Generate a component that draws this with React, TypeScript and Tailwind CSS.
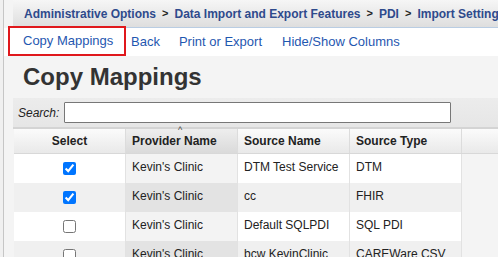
import React from "react";

const rows = [
  { checked: true, provider: "Kevin's Clinic", source: "DTM Test Service", type: "DTM" },
  { checked: true, provider: "Kevin's Clinic", source: "cc", type: "FHIR" },
  { checked: false, provider: "Kevin's Clinic", source: "Default SQLPDI", type: "SQL PDI" },
  { checked: false, provider: "Kevin's Clinic", source: "bcw KevinClinic", type: "CAREWare CSV" },
];

export default function App() {
  return (
    <div
      className="w-[498px] h-[257px] overflow-hidden bg-[#f4f4f4] flex"
      style={{ fontFamily: '"Liberation Sans", Arial, sans-serif' }}
    >
      <div className="w-[3px] shrink-0 bg-[#f0f0f0]" />
      <div className="w-[1px] shrink-0 bg-[#c6c6c6]" />
      <div className="flex-1 flex flex-col min-w-0">
        {/* breadcrumb */}
        <div className="ml-[9px] h-[28px] shrink-0 flex items-center gap-[6px] pl-[11px] whitespace-nowrap overflow-hidden text-[12px] font-bold text-[#2e4a8c] bg-gradient-to-b from-[#f6f6f6] to-[#dedede] border-b border-[#b9cde3]">
          <span>Administrative Options</span>
          <span className="text-[#222] text-[11px]">&gt;</span>
          <span>Data Import and Export Features</span>
          <span className="text-[#222] text-[11px]">&gt;</span>
          <span>PDI</span>
          <span className="text-[#222] text-[11px]">&gt;</span>
          <span>Import Settings</span>
        </div>
        {/* nav row */}
        <div className="h-[28px] shrink-0 bg-white flex items-center whitespace-nowrap text-[13px] text-[#1f57b0]">
          <div className="ml-[4px] h-[30px] -mt-[2px] w-[118px] border-2 border-[#e0181c] flex items-center pl-[13px]">
            Copy Mappings
          </div>
          <span className="ml-[5px]">Back</span>
          <span className="ml-[19px]">Print or Export</span>
          <span className="ml-[20px]">Hide/Show Columns</span>
        </div>
        {/* title */}
        <div className="h-[42px] shrink-0 pl-[19px] pt-[7px] text-[24px] font-bold text-[#333] leading-[28px]">
          Copy Mappings
        </div>
        {/* search */}
        <div className="ml-[9px] h-[31px] shrink-0 flex items-center bg-gradient-to-b from-[#ececec] to-[#e6e6e6] border-b-2 border-[#d4d4d4]">
          <span className="pl-[5px] text-[12px] italic text-[#222]">Search:</span>
          <div className="ml-[5px] w-[387px] h-[21px] bg-white border border-[#777] rounded-[1px]" />
        </div>
        {/* table */}
        <div className="ml-[10px] flex flex-col text-[12px] text-[#222]">
          <div className="h-[25px] flex font-bold bg-gradient-to-b from-[#fbfbfb] to-[#e9e9e9] border-b border-[#d8d8d8]">
            <div className="w-[112px] flex items-center justify-center border-r border-[#dcdcdc]">Select</div>
            <div className="w-[112px] relative flex items-center pl-[6px] bg-gradient-to-b from-[#eeeeee] to-[#dadada] border-r border-[#dcdcdc]">
              Provider Name
              <span className="absolute left-[52px] top-[-5px] text-[9px] font-normal text-[#444]">^</span>
            </div>
            <div className="w-[112px] flex items-center pl-[6px] border-r border-[#dcdcdc]">Source Name</div>
            <div className="w-[112px] flex items-center pl-[6px] border-r border-[#dcdcdc]">Source Type</div>
            <div className="flex-1" />
          </div>
          {rows.map((r, i) => (
            <div key={i} className="h-[29px] flex shrink-0">
              <div className={`w-[112px] flex items-center justify-center border-r border-[#e2e2e2] ${i % 2 ? "bg-[#f0f0f0]" : "bg-white"}`}>
                <input type="checkbox" defaultChecked={r.checked} className="w-[13px] h-[13px] m-0" />
              </div>
              <div className={`w-[112px] pl-[6px] pt-[4px] border-r border-[#e2e2e2] whitespace-nowrap ${i % 2 ? "bg-[#e3e3e3]" : "bg-[#f3f3f3]"}`}>
                {r.provider}
              </div>
              <div className={`w-[112px] pl-[6px] pt-[4px] border-r border-[#e2e2e2] whitespace-nowrap ${i % 2 ? "bg-[#f0f0f0]" : "bg-white"}`}>
                {r.source}
              </div>
              <div className={`w-[112px] pl-[6px] pt-[4px] border-r border-[#e2e2e2] whitespace-nowrap ${i % 2 ? "bg-[#f0f0f0]" : "bg-white"}`}>
                {r.type}
              </div>
              <div className="flex-1" />
            </div>
          ))}
        </div>
      </div>
    </div>
  );
}
